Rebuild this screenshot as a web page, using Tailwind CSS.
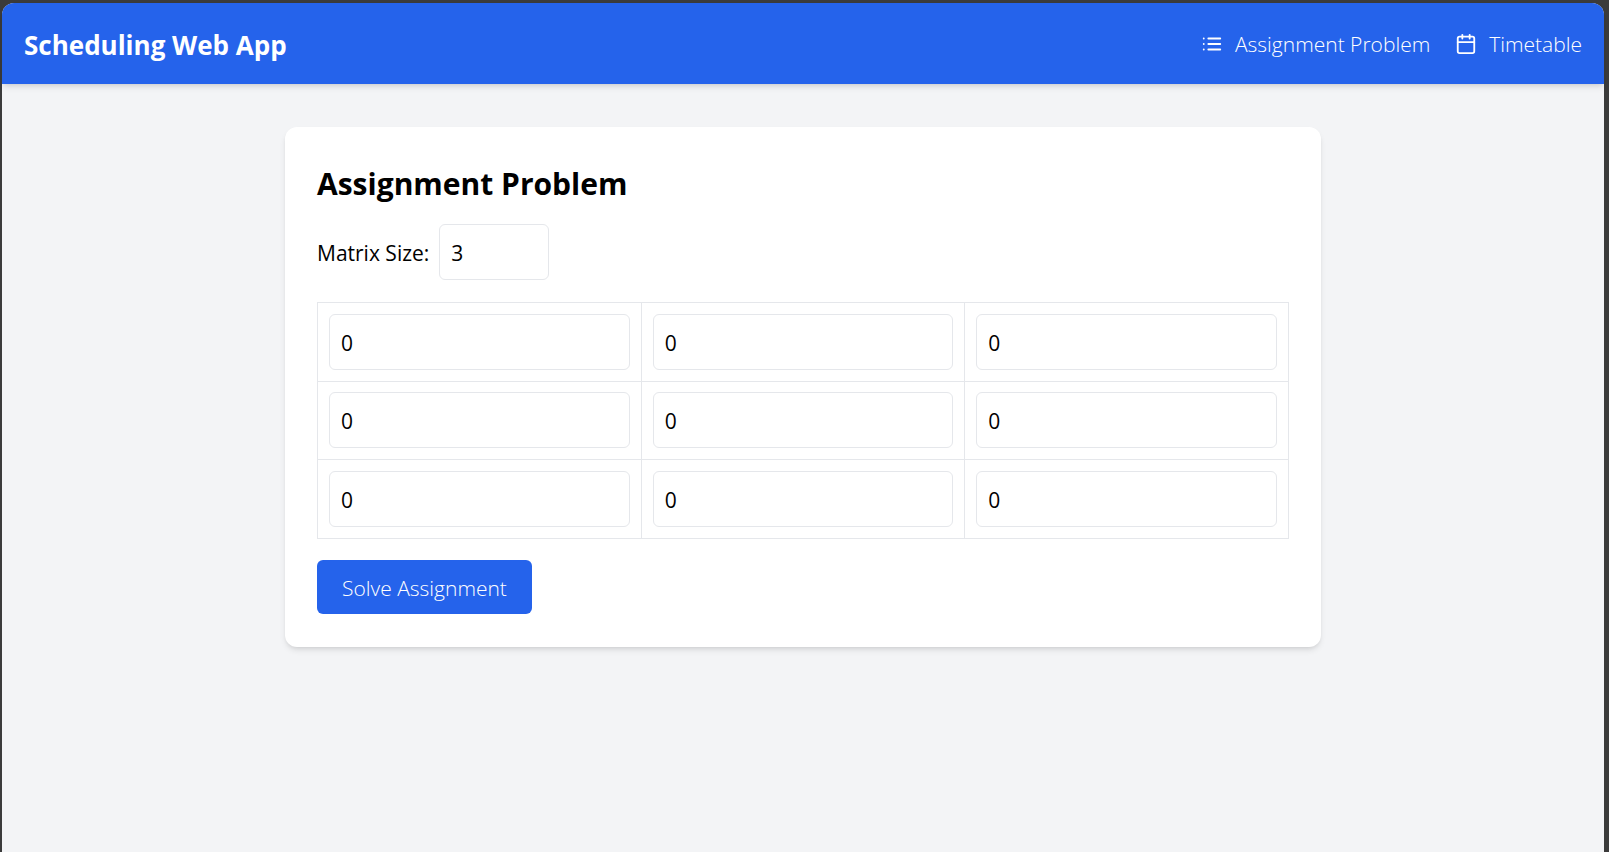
<!DOCTYPE html>
<html lang="en">
<head>
<meta charset="utf-8">
<meta name="viewport" content="width=device-width, initial-scale=1">
<title>Scheduling Web App</title>
<script src="https://cdn.jsdelivr.net/npm/@tailwindcss/browser@4"></script>
</head>
<body class="bg-[#3b3b3b] font-['Open_Sans','Noto_Sans',sans-serif] text-[21px] leading-8 text-black">
<div class="flex min-h-screen flex-col pt-[3px] pr-[5px] pl-[2px]">
  <div class="flex grow flex-col rounded-t-xl bg-[#f3f4f6]">
    <header class="flex items-center justify-between rounded-t-xl bg-[#2563eb] px-[22px] py-5 text-white shadow-md">
      <h1 class="pt-[3px] text-[26px] leading-[38px] font-bold">Scheduling Web App</h1>
      <nav class="flex gap-[25px] font-light">
        <a href="#assignment" class="flex items-center gap-3">
          <svg class="size-[22px]" viewBox="0 0 24 24" fill="none" stroke="currentColor" stroke-width="2" stroke-linecap="round" stroke-linejoin="round" aria-hidden="true"><path d="M8 6h13M8 12h13M8 18h13M3 6h.01M3 12h.01M3 18h.01"/></svg>
          Assignment Problem
        </a>
        <a href="#timetable" class="flex items-center gap-3">
          <svg class="size-[22px]" viewBox="0 0 24 24" fill="none" stroke="currentColor" stroke-width="2" stroke-linecap="round" stroke-linejoin="round" aria-hidden="true"><rect x="3" y="4" width="18" height="18" rx="2"/><path d="M16 2v4M8 2v4M3 10h18"/></svg>
          Timetable
        </a>
      </nav>
    </header>
    <main id="assignment" class="mx-auto mt-[43px] mb-10 w-full max-w-[1036px] rounded-xl bg-white px-8 pt-8 pb-[33px] shadow-md">
      <h2 class="mb-4 text-[30px] leading-[49px] font-bold">Assignment Problem</h2>
      <div class="mb-[22px] flex items-center gap-2.5">
        <label for="size" class="pt-0.5">Matrix Size:</label>
        <input id="size" type="number" value="3" class="h-14 w-[110px] rounded-md border border-gray-200 px-[11px] pt-0.5">
      </div>
      <table class="w-full table-fixed border-collapse">
        <tbody>
          <tr>
            <td class="border border-gray-200 p-[11px]"><input type="number" value="0" aria-label="Row 1, column 1" class="block h-14 w-full rounded-md border border-gray-200 px-[11px] pt-0.5"></td>
            <td class="border border-gray-200 p-[11px]"><input type="number" value="0" aria-label="Row 1, column 2" class="block h-14 w-full rounded-md border border-gray-200 px-[11px] pt-0.5"></td>
            <td class="border border-gray-200 p-[11px]"><input type="number" value="0" aria-label="Row 1, column 3" class="block h-14 w-full rounded-md border border-gray-200 px-[11px] pt-0.5"></td>
          </tr>
          <tr>
            <td class="border border-gray-200 px-[11px] pt-2.5 pb-[11px]"><input type="number" value="0" aria-label="Row 2, column 1" class="block h-14 w-full rounded-md border border-gray-200 px-[11px] pt-0.5"></td>
            <td class="border border-gray-200 px-[11px] pt-2.5 pb-[11px]"><input type="number" value="0" aria-label="Row 2, column 2" class="block h-14 w-full rounded-md border border-gray-200 px-[11px] pt-0.5"></td>
            <td class="border border-gray-200 px-[11px] pt-2.5 pb-[11px]"><input type="number" value="0" aria-label="Row 2, column 3" class="block h-14 w-full rounded-md border border-gray-200 px-[11px] pt-0.5"></td>
          </tr>
          <tr>
            <td class="border border-gray-200 p-[11px]"><input type="number" value="0" aria-label="Row 3, column 1" class="block h-14 w-full rounded-md border border-gray-200 px-[11px] pt-0.5"></td>
            <td class="border border-gray-200 p-[11px]"><input type="number" value="0" aria-label="Row 3, column 2" class="block h-14 w-full rounded-md border border-gray-200 px-[11px] pt-0.5"></td>
            <td class="border border-gray-200 p-[11px]"><input type="number" value="0" aria-label="Row 3, column 3" class="block h-14 w-full rounded-md border border-gray-200 px-[11px] pt-0.5"></td>
          </tr>
        </tbody>
      </table>
      <button type="button" class="mt-[21px] block rounded-md bg-[#2563eb] px-[25px] pt-3 pb-2.5 font-light text-white">Solve Assignment</button>
    </main>
  </div>
</div>
</body>
</html>
